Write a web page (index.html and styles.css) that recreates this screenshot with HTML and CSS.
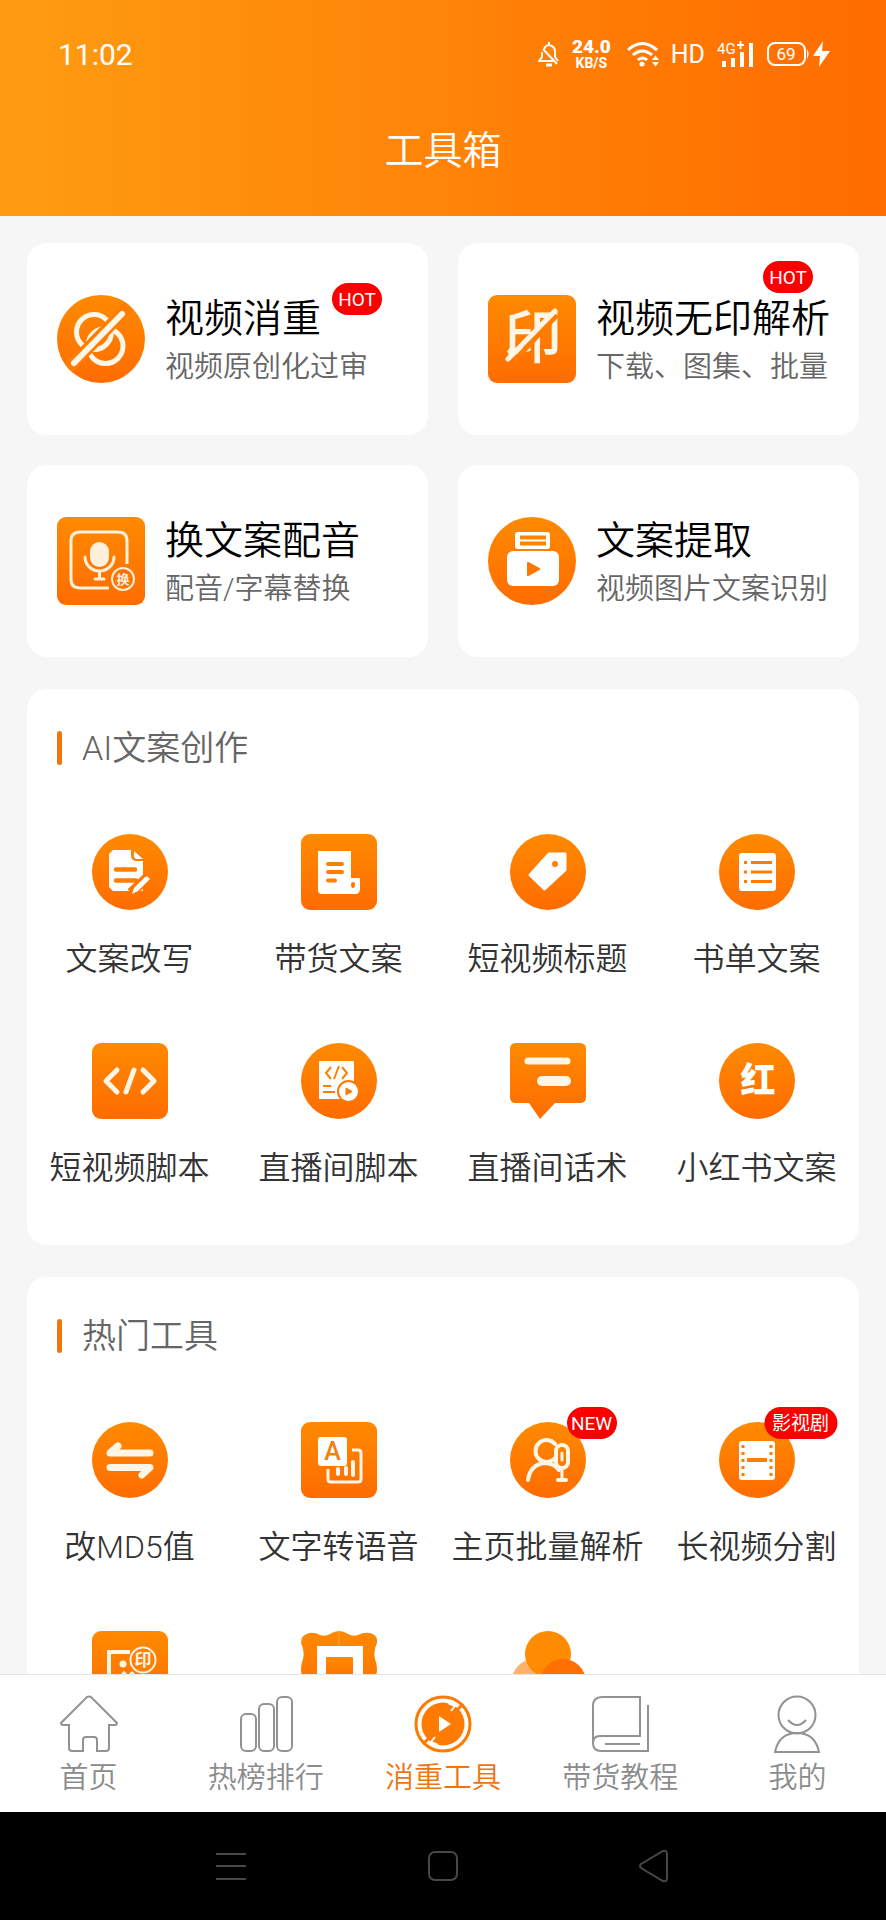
FILE: index.html
```html
<!DOCTYPE html>
<html lang="zh-CN">
    <head>
        <meta charset="utf-8">
        <meta name="viewport" content="width=device-width, initial-scale=1">
        <title>工具箱</title>
        <link rel="stylesheet" href="styles.css">
    </head>

    <body>

        <header class="header">
            <div class="status-bar">
                <span class="time">11:02</span>
                <svg class="status-bell" width="22" height="26" viewBox="0 0 22 26" fill="none" stroke="#fff" stroke-width="2">
                    <path d="M6 8 Q8 4 11 4 Q17 5 17 11 V16 L20 20 M4 11 V16 L1 20 H16 M5 8 L19 23 M11 1 V4"/>
                    <path d="M8 24 H14" stroke-width="3"/>
                </svg>
                <span class="speed"><b>24.0</b><small>KB/S</small></span>
                <svg class="status-wifi" width="34" height="26" viewBox="0 0 34 26" fill="none" stroke="#fff" stroke-width="3">
                    <path d="M1 9 Q15 -4 30 9 M6 14 Q15 6 25 14 M11 19 Q15 15 20 19"/>
                    <circle cx="15" cy="23" r="2.500" fill="#fff" stroke="none"/>
                    <path d="M25 19 L28.500 14.500 L32 19 Z M25 21 L28.500 25.500 L32 21 Z" fill="#fff" stroke="none"/>
                </svg>
                <span class="hd">HD</span>
                <svg class="status-signal" width="38" height="27" viewBox="0 0 38 27" fill="#fff">
                    <text x="0" y="13" class="signal-text">4G</text>
                    <path d="M20 4 H27 M23.500 0 V8" stroke="#fff" stroke-width="2"/>
                    <path d="M5 20 h4 v6 h-4 z M14 17 h4 v9 h-4 z M23 11 h4 v15 h-4 z M32 2 h4 v24 h-4 z"/>
                </svg>
                <svg class="status-battery" width="64" height="26" viewBox="0 0 64 26">
                    <rect x="1" y="2" width="37" height="22" rx="7" fill="none" stroke="#fff" stroke-width="2"/>
                    <path d="M40 8 Q43 13 40 18 Z" fill="#fff"/>
                    <text x="19" y="19" text-anchor="middle" class="battery-text">69</text>
                    <path d="M56 0 L46 15 H53 L52 26 L63 10 H55 Z" fill="#fff"/>
                </svg>
            </div>
            <h1>工具箱</h1>
        </header>

        <main class="content">
            <div class="cards">
                <a class="card" href="#">
                    <svg class="card-icon circle" viewBox="0 0 88 88" fill="none" stroke="#fff6e8" stroke-width="5">
                        <circle cx="37" cy="37" r="17.500"/>
                        <circle cx="48.500" cy="51" r="17.500"/>
                        <path d="M72 11 L10 75" stroke="#ff7d03" stroke-width="12"/>
                        <path d="M65 19 L17 68" stroke-width="6" stroke-linecap="round"/>
                    </svg>
                    <div class="card-body">
                        <h2>视频消重</h2>
                        <p>视频原创化过审</p>
                    </div>
                    <span class="badge badge-low">HOT</span>
                </a>
                <a class="card" href="#">
                    <svg class="card-icon square" viewBox="0 0 88 88" fill="#fff6e8">
                        <text x="45" y="63" text-anchor="middle" class="stamp">印</text>
                        <path d="M69 20 L26 66" stroke="#ff7d03" stroke-width="5"/>
                        <path d="M67 16 L20 64" stroke="#fff6e8" stroke-width="5" stroke-linecap="round"/>
                    </svg>
                    <div class="card-body">
                        <h2>视频无印解析</h2>
                        <p>下载、图集、批量</p>
                    </div>
                    <span class="badge badge-high">HOT</span>
                </a>
                <a class="card" href="#">
                    <svg class="card-icon square" viewBox="0 0 88 88" fill="none" stroke="#fff0dc" stroke-width="3" stroke-linecap="round">
                        <path d="M70 47 V24 Q70 15 61 15 H23 Q14 15 14 24 V62 Q14 71 23 71 H52" stroke-linecap="butt"/>
                        <rect x="33" y="25" width="19" height="25" rx="9.500" fill="#fff0dc" stroke="none"/>
                        <path d="M28 40 A14.500 14 0 0 0 57 40 M42.500 54 V62 M38 62 H47"/>
                        <circle cx="66" cy="62" r="11" fill="#ff7302" stroke-width="2"/>
                        <text x="66" y="67" text-anchor="middle" fill="#fff0dc" stroke="none" class="mini">换</text>
                    </svg>
                    <div class="card-body">
                        <h2>换文案配音</h2>
                        <p>配音/字幕替换</p>
                    </div>
                </a>
                <a class="card" href="#">
                    <svg class="card-icon circle" viewBox="0 0 88 88" fill="#fff">
                        <rect x="19" y="34" width="52" height="35" rx="6"/>
                        <rect x="27" y="15" width="35" height="17" rx="3"/>
                        <path d="M32 20.500 H58 M32 26.500 H58" stroke="#ff8500" stroke-width="4"/>
                        <path d="M40 46 L51 52 L40 58 Z" fill="#ff7700" stroke="#ff7700" stroke-width="2" stroke-linejoin="round"/>
                    </svg>
                    <div class="card-body">
                        <h2>文案提取</h2>
                        <p>视频图片文案识别</p>
                    </div>
                </a>
            </div>

            <section class="panel">
                <h3>AI文案创作</h3>
                <div class="tools">
                    <a class="tool" href="#">
                        <span class="tool-icon">
                            <svg class="circle" viewBox="0 0 76 76" fill="#fff">
                                <path d="M21 16 H39 V21 Q39 27 45 27 H51 V57 H21 L17 53 V20 Z"/>
                                <path d="M42 17 L51 25 H45 Q42 25 42 22 Z"/>
                                <path d="M24 35.500 H43 M24 46.500 H44" stroke="#ff7d03" stroke-width="4.500" stroke-linecap="round"/>
                                <path d="M56 43 L39 59" stroke="#ff7702" stroke-width="10"/>
                                <path d="M52 44 L55 42 L58 45 L46 57 L40 60 L42 54 Z"/>
                            </svg>
                        </span>
                        <span class="tool-name">文案改写</span>
                    </a>
                    <a class="tool" href="#">
                        <span class="tool-icon">
                            <svg class="square" viewBox="0 0 76 76" fill="#fff">
                                <path d="M17 17 H50 V44 H59 V55 Q59 60 54 60 H21 Q17 60 17 56 Z"/>
                                <path d="M27 30 H41 M27 38 H41 M27 46.500 H34" stroke="#ff7f02" stroke-width="4" stroke-linecap="round"/>
                                <ellipse cx="52" cy="51" rx="2" ry="3" fill="#ff7702"/>
                            </svg>
                        </span>
                        <span class="tool-name">带货文案</span>
                    </a>
                    <a class="tool" href="#">
                        <span class="tool-icon">
                            <svg class="circle" viewBox="0 0 76 76" fill="#fff">
                                <path d="M39 20 L55 20 V36 L34.500 55 L20 41 Z" stroke="#fff" stroke-width="3" stroke-linejoin="round"/>
                                <circle cx="45" cy="30" r="3" fill="#ff8001"/>
                            </svg>
                        </span>
                        <span class="tool-name">短视频标题</span>
                    </a>
                    <a class="tool" href="#">
                        <span class="tool-icon">
                            <svg class="circle" viewBox="0 0 76 76" fill="#fff">
                                <rect x="20" y="19" width="37" height="38" rx="3"/>
                                <path d="M32 28.500 H53 M32 38 H53 M32 47.500 H53" stroke="#ff7d03" stroke-width="3"/>
                                <path d="M25 28.500 H28 M25 38 H28 M25 47.500 H28" stroke="#ff7d03" stroke-width="3"/>
                            </svg>
                        </span>
                        <span class="tool-name">书单文案</span>
                    </a>
                    <a class="tool" href="#">
                        <span class="tool-icon">
                            <svg class="square" viewBox="0 0 76 76" fill="none" stroke="#fff6e8" stroke-width="5" stroke-linecap="round" stroke-linejoin="round">
                                <path d="M25 27 L14 38 L25 49 M42 27 L34 49 M51 27 L62 38 L51 49"/>
                            </svg>
                        </span>
                        <span class="tool-name">短视频脚本</span>
                    </a>
                    <a class="tool" href="#">
                        <span class="tool-icon">
                            <svg class="circle" viewBox="0 0 76 76" fill="#fff">
                                <rect x="18" y="18" width="35" height="38" rx="1"/>
                                <path d="M30 24 L25 30 L30 36 M38 23 L33 36 M41 24 L46 30 L41 36" fill="none" stroke="#ff8001" stroke-width="2"/>
                                <path d="M22 43 H30 M22 49 H34" stroke="#ff7a02" stroke-width="2"/>
                                <circle cx="47.500" cy="48.500" r="10.500" stroke="#ff7702" stroke-width="2"/>
                                <path d="M45 45 L51 48.500 L45 52 Z" fill="#ff7702" stroke="#ff7702" stroke-linejoin="round"/>
                            </svg>
                        </span>
                        <span class="tool-name">直播间脚本</span>
                    </a>
                    <a class="tool" href="#">
                        <span class="tool-icon">
                            <svg viewBox="0 0 76 76">
                                <linearGradient id="orange" x1="0" y1="0" x2="0" y2="1">
                                    <stop offset="0" stop-color="#ff8a00"/>
                                    <stop offset="1" stop-color="#ff6c00"/>
                                </linearGradient>
                                <path d="M6 0 H70 Q76 0 76 6 V54 Q76 60 70 60 H45 L30 76 L19 60 H6 Q0 60 0 54 V6 Q0 0 6 0 Z" fill="url(#orange)"/>
                                <path d="M18 18 H57" stroke="#fff6e8" stroke-width="7" stroke-linecap="round"/>
                                <path d="M32 38 H56" stroke="#fff6e8" stroke-width="10" stroke-linecap="round"/>
                            </svg>
                        </span>
                        <span class="tool-name">直播间话术</span>
                    </a>
                    <a class="tool" href="#">
                        <span class="tool-icon">
                            <svg class="circle" viewBox="0 0 76 76" fill="#fff">
                                <text x="39" y="50" text-anchor="middle" class="red-book">红</text>
                            </svg>
                        </span>
                        <span class="tool-name">小红书文案</span>
                    </a>
                </div>
            </section>

            <section class="panel">
                <h3>热门工具</h3>
                <div class="tools">
                    <a class="tool" href="#">
                        <span class="tool-icon">
                            <svg class="circle" viewBox="0 0 76 76" fill="none" stroke="#fff6e8" stroke-width="7" stroke-linecap="round" stroke-linejoin="round">
                                <path d="M58 31 H18 L26 24 M18 45.500 H58 L50 53"/>
                            </svg>
                        </span>
                        <span class="tool-name">改MD5值</span>
                    </a>
                    <a class="tool" href="#">
                        <span class="tool-icon">
                            <svg class="square" viewBox="0 0 76 76" fill="none" stroke="#fff6e8" stroke-width="3">
                                <rect x="17" y="15" width="29" height="29" rx="3" fill="#fff" stroke="none"/>
                                <text x="31.500" y="38" text-anchor="middle" fill="#f08010" stroke="none" class="letter">A</text>
                                <path d="M51 28 H57 Q60 28 60 31 V57 Q60 60 57 60 H30 Q27 60 27 57 V47"/>
                                <path d="M37 47 V52 M45 46 V52 M52 40 V53" stroke-width="4" stroke-linecap="round"/>
                            </svg>
                        </span>
                        <span class="tool-name">文字转语音</span>
                    </a>
                    <a class="tool" href="#">
                        <span class="tool-icon">
                            <svg class="circle" viewBox="0 0 76 76" fill="none" stroke="#fff6e8" stroke-width="4" stroke-linecap="round">
                                <path d="M45 22 A11 11 0 1 0 45 36"/>
                                <path d="M18 58 Q20 43 34 41 Q44 41 49 48"/>
                                <rect x="46" y="23" width="12" height="23" rx="6"/>
                                <path d="M52 31 V38 M52 47 V57" stroke-width="3"/>
                                <path d="M48 58 H56"/>
                            </svg>
                            <span class="badge">NEW</span>
                        </span>
                        <span class="tool-name">主页批量解析</span>
                    </a>
                    <a class="tool" href="#">
                        <span class="tool-icon">
                            <svg class="circle" viewBox="0 0 76 76" fill="#fff">
                                <rect x="20" y="19" width="36" height="39" rx="3"/>
                                <path d="M24 23 V56 M52 23 V56" stroke="#ff7d03" stroke-width="3" stroke-dasharray="3 4"/>
                                <path d="M28 38 H48" stroke="#ff7d03" stroke-width="4"/>
                            </svg>
                            <span class="badge badge-wide">影视剧</span>
                        </span>
                        <span class="tool-name">长视频分割</span>
                    </a>
                    <a class="tool" href="#">
                        <span class="tool-icon">
                            <svg class="square" viewBox="0 0 76 76" fill="none" stroke="#fff6e8" stroke-width="4">
                                <path d="M38 21 H17 V58 H58 V46"/>
                                <circle cx="31" cy="33" r="3.500" fill="#fff6e8" stroke="none"/>
                                <path d="M24 52 L32 42 L36 46 L40 42 L50 52" stroke-width="3"/>
                                <circle cx="51" cy="29" r="12.500" fill="#ff7e03" stroke-width="2"/>
                                <text x="51" y="35" text-anchor="middle" fill="#fff6e8" stroke="none" class="mini-stamp">印</text>
                            </svg>
                        </span>
                    </a>
                    <a class="tool" href="#">
                        <span class="tool-icon">
                            <svg viewBox="0 0 76 76" fill="url(#orange)">
                                <path d="M8 2 Q14 1 19 4 Q24 6 29 3 Q38 -3 47 3 Q52 6 57 4 Q62 1 69 2 Q77 4 76 12 Q72 20 74 28 Q78 38 74 48 Q72 56 76 64 Q77 72 69 74 Q62 75 57 72 Q52 70 47 73 Q38 79 29 73 Q24 70 19 72 Q14 75 8 74 Q0 72 0 64 Q4 56 2 48 Q-2 38 2 28 Q4 20 0 12 Q0 4 8 2 Z"/>
                                <path d="M38 0 V15" stroke="#ffa240"/>
                                <rect x="16" y="15" width="46" height="46" fill="#fff"/>
                                <rect x="25" y="26" width="27" height="25" rx="1"/>
                            </svg>
                        </span>
                    </a>
                    <a class="tool" href="#">
                        <span class="tool-icon">
                            <svg viewBox="0 0 76 76">
                                <circle cx="24" cy="50" r="22" fill="#ffb26b"/>
                                <circle cx="38" cy="23" r="23" fill="#ff8c00"/>
                                <circle cx="53" cy="51" r="23" fill="#ff7000"/>
                            </svg>
                        </span>
                    </a>
                </div>
            </section>
        </main>

        <nav class="tab-bar">
            <a class="tab" href="#">
                <svg viewBox="0 0 58 58">
                    <path d="M27 2 Q29 1 31 2 L57 28 Q57 30 55 30 H49 V53 Q49 56 46 56 H37 V45 Q37 42 34 42 H26 Q23 42 23 45 V56 H12 Q9 56 9 53 V30 H3 Q1 30 1 28 Z"/>
                </svg>
                <span>首页</span>
            </a>
            <a class="tab" href="#">
                <svg viewBox="0 0 58 58">
                    <rect x="4" y="19" width="15" height="37" rx="5"/>
                    <rect x="22" y="9" width="15" height="47" rx="5"/>
                    <rect x="40" y="2" width="15" height="54" rx="5"/>
                </svg>
                <span>热榜排行</span>
            </a>
            <a class="tab active" href="#">
                <svg viewBox="0 0 58 58">
                    <circle cx="29" cy="29" r="27" stroke-width="3"/>
                    <circle cx="29" cy="29" r="21.500" class="disc"/>
                    <path d="M42 16 L49 9 M16 42 L9 49" stroke-width="3"/>
                    <path d="M34 8 L41 11 L37 16 M24 50 L17 47 L21 42" class="notch"/>
                    <path d="M25 21 L37 29 L25 37 Z" class="play"/>
                </svg>
                <span>消重工具</span>
            </a>
            <a class="tab" href="#">
                <svg viewBox="0 0 58 58">
                    <path d="M2 48 V11 Q2 2 11 2 H49 V41 H9 Q2 41 2 48 Q2 56 10 56 H57 V10 M14 49 H49"/>
                </svg>
                <span>带货教程</span>
            </a>
            <a class="tab" href="#">
                <svg viewBox="0 0 58 58">
                    <circle cx="29" cy="20" r="18.500"/>
                    <path d="M20 25 Q29 35 38 25 M7 57 Q11 38 29 38 Q47 38 51 57 Z"/>
                </svg>
                <span>我的</span>
            </a>
        </nav>

        <div class="system-bar">
            <button type="button" aria-label="菜单">
                <svg viewBox="0 0 32 32"><path d="M1 4 H31 M1 16 H31 M1 29 H31"/></svg>
            </button>
            <button type="button" aria-label="主屏幕">
                <svg viewBox="0 0 32 32"><rect x="2" y="2" width="28" height="28" rx="6"/></svg>
            </button>
            <button type="button" aria-label="返回">
                <svg viewBox="0 0 32 32"><path d="M2 14 L24 1 Q28 0 28 4 V28 Q28 32 24 31 L2 18 Q0 16 2 14 Z"/></svg>
            </button>
        </div>
    </body>
</html>
```

FILE: styles.css
```css
* {
    box-sizing: border-box;
}

body {
    margin: 0;
    height: 100vh;
    display: flex;
    flex-direction: column;
    background-color: #f6f6f6;
    color: #333;
    font-family: Roboto, "Noto Sans CJK SC", sans-serif;
    font-weight: 350;
}

h1, h2, h3, p {
    margin: 0;
    font-weight: inherit;
}

a {
    color: inherit;
    text-decoration: none;
}

/* header */

.header {
    background: linear-gradient(to right, #ff9c12, #ff8408 50%, #ff6c00);
    color: white;
    padding-bottom: 22px;
}

.header h1 {
    font-size: 39px;
    line-height: 86px;
    text-align: center;
}

.status-bar {
    height: 108px;
    padding: 0 55px 0 58px;
    display: flex;
    align-items: center;
    font-weight: 400;
}

.time {
    font-size: 30px;
    margin-right: auto;
}

.speed {
    display: flex;
    flex-direction: column;
    align-items: center;
    margin: 0 16px 0 12px;
    font-weight: 700;
}

.speed b {
    font-size: 19px;
    line-height: 18px;
}

.speed small {
    font-size: 14px;
    line-height: 14px;
}

.hd {
    margin: 0 12px 0 10px;
    font-size: 25px;
}

.signal-text {
    font-size: 15px;
}

.battery-text {
    font-size: 17px;
    fill: white;
}

.status-battery {
    margin-left: 12px;
}

/* big cards */

.content {
    flex: 1;
    min-height: 0;
    overflow-y: auto;
    scrollbar-width: none;
    padding: 27px;
}

.cards {
    display: grid;
    grid-template-columns: 1fr 1fr;
    gap: 30px;
}

.card {
    position: relative;
    display: flex;
    align-items: center;
    gap: 20px;
    padding: 46px 0 46px 30px;
    background-color: white;
    border-radius: 20px;
    white-space: nowrap;
}

.card-icon {
    width: 88px;
    height: 88px;
}

.card-body {
    padding-top: 4px;
}

.circle, .square {
    background: linear-gradient(#ff8a00, #ff6c00);
}

.circle {
    border-radius: 50%;
}

.square {
    border-radius: 9px;
}

.card h2 {
    color: black;
    font-size: 39px;
    line-height: 52px;
}

.card p {
    color: #666;
    font-size: 29px;
    line-height: 44px;
}

.badge {
    position: absolute;
    min-width: 50px;
    height: 32px;
    padding: 0 4px;
    border-radius: 16px;
    background-color: #fa0000;
    color: white;
    font-size: 19px;
    font-weight: 400;
    line-height: 33px;
    text-align: center;
    white-space: nowrap;
}

.badge-wide {
    padding: 0 8px;
}

.badge-low {
    top: 40px;
    right: 46px;
}

.badge-high {
    top: 18px;
    right: 46px;
}

/* tool panels */

.panel {
    margin-top: 32px;
    padding: 38px 0 54px;
    background-color: white;
    border-radius: 20px;
}

.panel h3 {
    display: flex;
    align-items: center;
    gap: 20px;
    margin-left: 30px;
    color: #666;
    font-size: 34px;
    line-height: 42px;
}

.panel h3::before {
    content: "";
    width: 5px;
    height: 34px;
    border-radius: 3px;
    background-color: #f0750f;
}

.tools {
    display: grid;
    grid-template-columns: repeat(4, 1fr);
    row-gap: 61px;
    margin: 65px -2px 0;
}

.tool {
    display: flex;
    flex-direction: column;
    align-items: center;
    gap: 26px;
}

.tool-icon {
    position: relative;
    width: 76px;
    height: 76px;
}

.tool-icon svg {
    display: block;
    width: 76px;
    height: 76px;
}

.tool-icon .badge {
    top: -15px;
    left: 82px;
    transform: translateX(-50%);
}

.tool-name {
    font-size: 32px;
    line-height: 46px;
    white-space: nowrap;
}

/* characters inside the icons */

.stamp {
    font-size: 58px;
    font-weight: 500;
}

.mini {
    font-size: 13px;
    font-weight: 700;
}

.mini-stamp {
    font-size: 17px;
    font-weight: 700;
}

.letter {
    font-size: 25px;
    font-weight: 500;
}

.red-book {
    font-size: 35px;
    font-weight: 900;
}

/* bottom tabs */

.tab-bar {
    display: grid;
    grid-template-columns: repeat(5, 1fr);
    padding: 20px 0 14px;
    border-top: 1px solid #e5e5e5;
    background-color: white;
}

.tab {
    display: flex;
    flex-direction: column;
    align-items: center;
    gap: 5px;
    color: #8c8c8c;
    font-size: 29px;
    line-height: 40px;
}

.tab svg {
    width: 58px;
    height: 58px;
    fill: none;
    stroke: #929292;
    stroke-width: 2;
}

.tab.active {
    color: #f0750f;
}

.tab.active svg {
    stroke: #ff7a00;
}

.tab .disc {
    fill: #ff7a00;
    stroke: none;
}

.tab .notch {
    stroke: white;
}

.tab .play {
    fill: white;
    stroke: none;
}

/* system buttons */

.system-bar {
    display: flex;
    justify-content: center;
    gap: 180px;
    padding: 38px 0;
    background-color: black;
}

.system-bar button {
    width: 32px;
    height: 32px;
    padding: 0;
    border: 0;
    background: none;
}

.system-bar svg {
    display: block;
    fill: none;
    stroke: #484848;
    stroke-width: 2;
}
```
